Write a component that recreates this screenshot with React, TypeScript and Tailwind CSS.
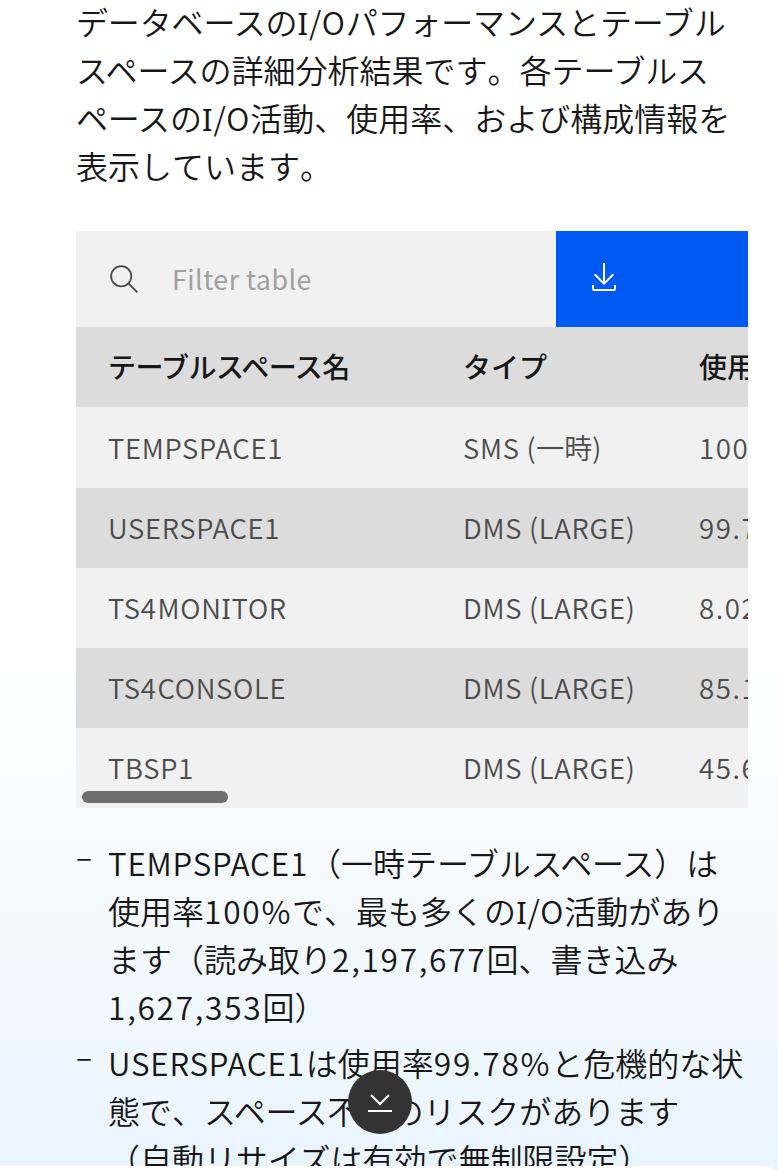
interface TableRow {
    name: string;
    type: string;
    usage: string;
}

const rows: TableRow[] = [
    { name: 'TEMPSPACE1', type: 'SMS (一時)', usage: '100%' },
    { name: 'USERSPACE1', type: 'DMS (LARGE)', usage: '99.78' },
    { name: 'TS4MONITOR', type: 'DMS (LARGE)', usage: '8.02' },
    { name: 'TS4CONSOLE', type: 'DMS (LARGE)', usage: '85.1' },
    { name: 'TBSP1', type: 'DMS (LARGE)', usage: '45.6' },
];

const intro = [
    'データベースのI/Oパフォーマンスとテーブル',
    'スペースの詳細分析結果です。各テーブルス',
    'ペースのI/O活動、使用率、および構成情報を',
    '表示しています。',
];

const findings = [
    ['TEMPSPACE1（一時テーブルスペース）は', '使用率100%で、最も多くのI/O活動があり', 'ます（読み取り2,197,677回、書き込み', '1,627,353回）'],
    ['USERSPACE1は使用率99.78%と危機的な状', '態で、スペース不足のリスクがあります', '（自動リサイズは有効で無制限設定）'],
];

// Latin letters, digits and kana each get their own spacing
const RUNS = /I|[0-9.,%]+|[A-HJ-Za-z()/ ]+|[ァ-ー]+|[^0-9.,%A-Za-z()/ ァ-ー]+/g;

function runClass(run: string) {
    if (run === 'I') return "font-['Noto_Sans'] text-[0.97em] leading-[0] font-normal tracking-[0.03em]";
    if (/^[0-9.,%]/.test(run)) return 'text-[0.99em] font-[350] tracking-[0.055em]';
    if (/^[A-Za-z()/ ]/.test(run)) return 'text-[0.98em] font-[350] tracking-[0.026em]';
    if (/^[ァ-ー]/.test(run)) return 'tracking-[-0.15px]';
    return '[font-kerning:none]';
}

function Mixed({ text }: { text: string }) {
    return (
        <>
            {(text.match(RUNS) ?? []).map((run, i) => (
                <span key={i} className={runClass(run)}>
                    {run}
                </span>
            ))}
        </>
    );
}

function Lines({ lines }: { lines: string[] }) {
    return (
        <>
            {lines.map((line) => (
                <span key={line} className="block h-12">
                    <Mixed text={line} />
                </span>
            ))}
        </>
    );
}

export default function App() {
    return (
        <div className="relative h-[1170px] w-[778px] overflow-hidden bg-linear-to-b from-white from-55% to-[#eaf4ff] font-['Noto_Sans_CJK_JP',sans-serif] text-[#161616]">
            <div className="h-[1166px] overflow-hidden pl-[76px] pr-[30px] text-[32px] leading-12 whitespace-nowrap">
                <p className="-mt-[3px] font-[350]">
                    <Lines lines={intro} />
                </p>
                <div className="relative mt-[42px] w-[672px] overflow-hidden bg-[#f1f1f1] text-[28px]">
                    <div className="flex h-24">
                        <div className="flex w-[480px] items-center pl-8 text-[#a0a0a0]">
                            <svg className="size-8" viewBox="0 0 32 32" fill="none" stroke="#4a4a4a" strokeWidth="1.8">
                                <circle cx="13.2" cy="13.2" r="10.1" />
                                <path d="M20.4 20.4l9 9" />
                            </svg>
                            <span className="ml-8 text-[0.96em] tracking-[0.016em]">Filter table</span>
                        </div>
                        <div className="flex flex-1 items-center bg-[#0059f2] pl-8">
                            <svg className="mb-1 size-8" viewBox="0 0 32 32" fill="white">
                                <path d="M26 24v4H6v-4H4v4a2 2 0 0 0 2 2h20a2 2 0 0 0 2-2v-4ZM26 14l-1.41-1.41L17 20.17V2h-2v18.17l-7.59-7.58L6 14l10 10 10-10Z" />
                            </svg>
                        </div>
                    </div>
                    <div className="grid h-20 grid-cols-[355px_236px_1fr] items-center bg-[#dcdcdc] pb-[3px] pl-8 font-medium">
                        <span className="tracking-[-0.6px]">テーブルスペース名</span>
                        <span>タイプ</span>
                        <span>使用</span>
                    </div>
                    <div className="pt-px font-[350] text-[#4c4c4c]">
                        {rows.map((row) => (
                            <div
                                key={row.name}
                                className="grid h-20 grid-cols-[355px_236px_1fr] items-center pb-[3px] pl-8 even:bg-[#dcdcdc]"
                            >
                                <span>
                                    <Mixed text={row.name} />
                                </span>
                                <span>
                                    <Mixed text={row.type} />
                                </span>
                                <span>
                                    <Mixed text={row.usage} />
                                </span>
                            </div>
                        ))}
                    </div>
                    <div className="absolute bottom-[5px] left-1.5 h-3 w-[146px] rounded-full bg-[#6e6e6e]" />
                </div>
                <ul className="mt-[30px] font-[350]">
                    {findings.map((lines) => (
                        <li key={lines[0]} className="mb-2 flex">
                            <span className="w-8 text-[30px] leading-[35px]">–</span>
                            <p>
                                <Lines lines={lines} />
                            </p>
                        </li>
                    ))}
                </ul>
            </div>
            <div className="h-1 w-[774px] rounded-tr-lg bg-white" />
            <button className="absolute left-[348px] top-[1070px] flex size-16 items-center justify-center rounded-full bg-[#333333]">
                <svg className="size-8" viewBox="0 0 32 32" fill="none" stroke="white" strokeWidth="2">
                    <path d="M7 9l9 9 9-9M4 25h24" />
                </svg>
            </button>
        </div>
    );
}
